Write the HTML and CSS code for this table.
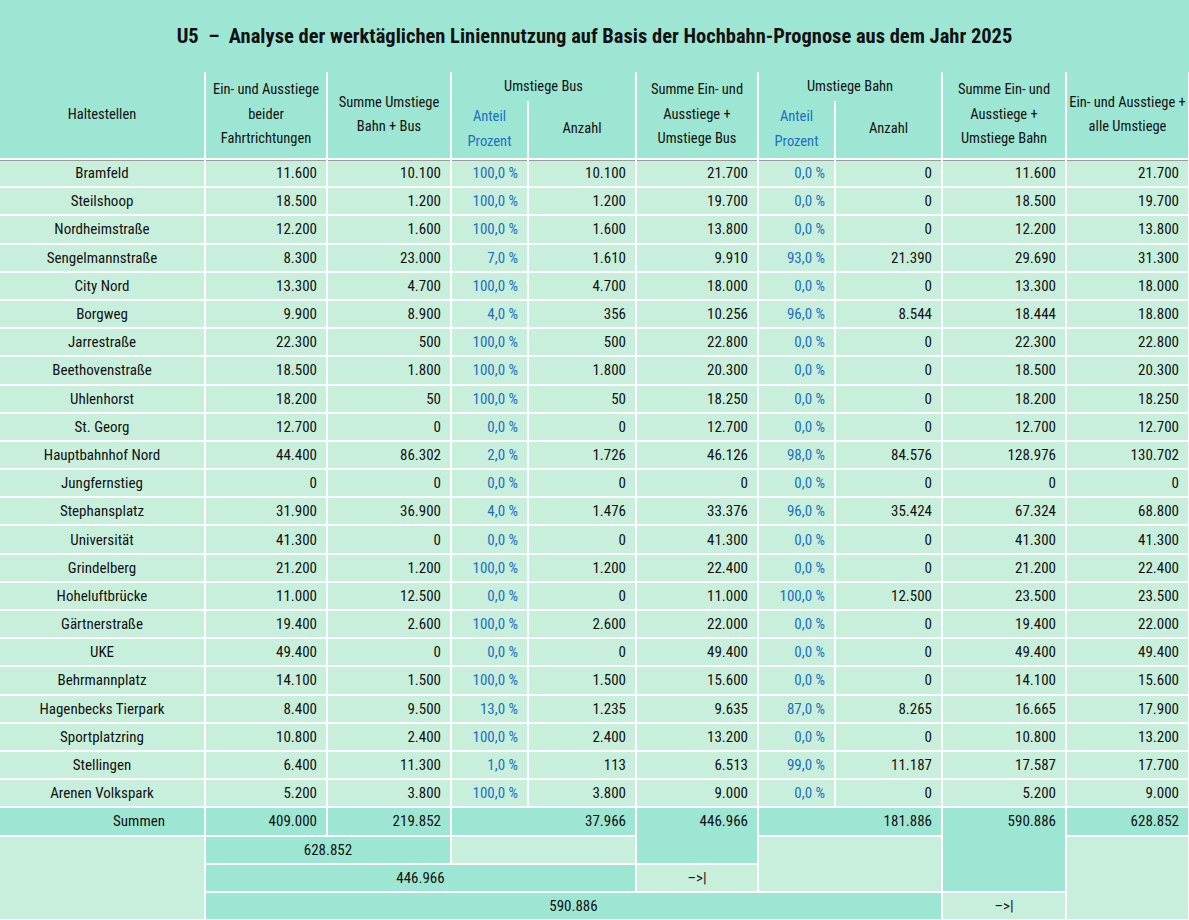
FILE: index.html
```html
<!DOCTYPE html>
<html lang="de">
<head>
  <meta charset="UTF-8" />
  <meta name="viewport" content="width=device-width, initial-scale=1.0" />
  <title>U5 Liniennutzung</title>
  <link rel="stylesheet" href="styles.css">
</head>
<body>
  <div class="title">U5&nbsp; –&nbsp; Analyse der werktäglichen Liniennutzung auf Basis der Hochbahn-Prognose aus dem Jahr 2025</div>

  <table class="sheet">
    <colgroup>
      <col style="width:205px"><col style="width:122px"><col style="width:124px">
      <col style="width:77px"><col style="width:108px"><col style="width:122px">
      <col style="width:77px"><col style="width:107px"><col style="width:124px">
      <col style="width:123px">
    </colgroup>
    <thead>
      <tr class="head-top">
        <th rowspan="2">Haltestellen</th>
        <th rowspan="2">Ein- und Ausstiege<br>beider<br>Fahrtrichtungen</th>
        <th rowspan="2">Summe Umstiege<br>Bahn + Bus</th>
        <th colspan="2">Umstiege Bus</th>
        <th rowspan="2">Summe Ein- und<br>Ausstiege +<br>Umstiege Bus</th>
        <th colspan="2">Umstiege Bahn</th>
        <th rowspan="2">Summe Ein- und<br>Ausstiege +<br>Umstiege Bahn</th>
        <th rowspan="2">Ein- und Ausstiege +<br>alle Umstiege</th>
      </tr>
      <tr class="head-sub">
        <th class="pct">Anteil<br>Prozent</th>
        <th>Anzahl</th>
        <th class="pct">Anteil<br>Prozent</th>
        <th>Anzahl</th>
      </tr>
    </thead>
    <tbody>
      <tr class="first"><td>Bramfeld</td><td>11.600</td><td>10.100</td><td class="pct">100,0 %</td><td>10.100</td><td>21.700</td><td class="pct">0,0 %</td><td>0</td><td>11.600</td><td>21.700</td></tr>
      <tr><td>Steilshoop</td><td>18.500</td><td>1.200</td><td class="pct">100,0 %</td><td>1.200</td><td>19.700</td><td class="pct">0,0 %</td><td>0</td><td>18.500</td><td>19.700</td></tr>
      <tr><td>Nordheimstraße</td><td>12.200</td><td>1.600</td><td class="pct">100,0 %</td><td>1.600</td><td>13.800</td><td class="pct">0,0 %</td><td>0</td><td>12.200</td><td>13.800</td></tr>
      <tr><td>Sengelmannstraße</td><td>8.300</td><td>23.000</td><td class="pct">7,0 %</td><td>1.610</td><td>9.910</td><td class="pct">93,0 %</td><td>21.390</td><td>29.690</td><td>31.300</td></tr>
      <tr><td>City Nord</td><td>13.300</td><td>4.700</td><td class="pct">100,0 %</td><td>4.700</td><td>18.000</td><td class="pct">0,0 %</td><td>0</td><td>13.300</td><td>18.000</td></tr>
      <tr><td>Borgweg</td><td>9.900</td><td>8.900</td><td class="pct">4,0 %</td><td>356</td><td>10.256</td><td class="pct">96,0 %</td><td>8.544</td><td>18.444</td><td>18.800</td></tr>
      <tr><td>Jarrestraße</td><td>22.300</td><td>500</td><td class="pct">100,0 %</td><td>500</td><td>22.800</td><td class="pct">0,0 %</td><td>0</td><td>22.300</td><td>22.800</td></tr>
      <tr><td>Beethovenstraße</td><td>18.500</td><td>1.800</td><td class="pct">100,0 %</td><td>1.800</td><td>20.300</td><td class="pct">0,0 %</td><td>0</td><td>18.500</td><td>20.300</td></tr>
      <tr><td>Uhlenhorst</td><td>18.200</td><td>50</td><td class="pct">100,0 %</td><td>50</td><td>18.250</td><td class="pct">0,0 %</td><td>0</td><td>18.200</td><td>18.250</td></tr>
      <tr><td>St. Georg</td><td>12.700</td><td>0</td><td class="pct">0,0 %</td><td>0</td><td>12.700</td><td class="pct">0,0 %</td><td>0</td><td>12.700</td><td>12.700</td></tr>
      <tr><td>Hauptbahnhof Nord</td><td>44.400</td><td>86.302</td><td class="pct">2,0 %</td><td>1.726</td><td>46.126</td><td class="pct">98,0 %</td><td>84.576</td><td>128.976</td><td>130.702</td></tr>
      <tr><td>Jungfernstieg</td><td>0</td><td>0</td><td class="pct">0,0 %</td><td>0</td><td>0</td><td class="pct">0,0 %</td><td>0</td><td>0</td><td>0</td></tr>
      <tr><td>Stephansplatz</td><td>31.900</td><td>36.900</td><td class="pct">4,0 %</td><td>1.476</td><td>33.376</td><td class="pct">96,0 %</td><td>35.424</td><td>67.324</td><td>68.800</td></tr>
      <tr><td>Universität</td><td>41.300</td><td>0</td><td class="pct">0,0 %</td><td>0</td><td>41.300</td><td class="pct">0,0 %</td><td>0</td><td>41.300</td><td>41.300</td></tr>
      <tr><td>Grindelberg</td><td>21.200</td><td>1.200</td><td class="pct">100,0 %</td><td>1.200</td><td>22.400</td><td class="pct">0,0 %</td><td>0</td><td>21.200</td><td>22.400</td></tr>
      <tr><td>Hoheluftbrücke</td><td>11.000</td><td>12.500</td><td class="pct">0,0 %</td><td>0</td><td>11.000</td><td class="pct">100,0 %</td><td>12.500</td><td>23.500</td><td>23.500</td></tr>
      <tr><td>Gärtnerstraße</td><td>19.400</td><td>2.600</td><td class="pct">100,0 %</td><td>2.600</td><td>22.000</td><td class="pct">0,0 %</td><td>0</td><td>19.400</td><td>22.000</td></tr>
      <tr><td>UKE</td><td>49.400</td><td>0</td><td class="pct">0,0 %</td><td>0</td><td>49.400</td><td class="pct">0,0 %</td><td>0</td><td>49.400</td><td>49.400</td></tr>
      <tr><td>Behrmannplatz</td><td>14.100</td><td>1.500</td><td class="pct">100,0 %</td><td>1.500</td><td>15.600</td><td class="pct">0,0 %</td><td>0</td><td>14.100</td><td>15.600</td></tr>
      <tr><td>Hagenbecks Tierpark</td><td>8.400</td><td>9.500</td><td class="pct">13,0 %</td><td>1.235</td><td>9.635</td><td class="pct">87,0 %</td><td>8.265</td><td>16.665</td><td>17.900</td></tr>
      <tr><td>Sportplatzring</td><td>10.800</td><td>2.400</td><td class="pct">100,0 %</td><td>2.400</td><td>13.200</td><td class="pct">0,0 %</td><td>0</td><td>10.800</td><td>13.200</td></tr>
      <tr><td>Stellingen</td><td>6.400</td><td>11.300</td><td class="pct">1,0 %</td><td>113</td><td>6.513</td><td class="pct">99,0 %</td><td>11.187</td><td>17.587</td><td>17.700</td></tr>
      <tr><td>Arenen Volkspark</td><td>5.200</td><td>3.800</td><td class="pct">100,0 %</td><td>3.800</td><td>9.000</td><td class="pct">0,0 %</td><td>0</td><td>5.200</td><td>9.000</td></tr>
    </tbody>
    <tfoot>
      <tr class="sums">
        <td class="label">Summen</td>
        <td>409.000</td>
        <td>219.852</td>
        <td colspan="2">37.966</td>
        <td rowspan="2" class="top">446.966</td>
        <td colspan="2">181.886</td>
        <td rowspan="3" class="top">590.886</td>
        <td>628.852</td>
      </tr>
      <tr>
        <td rowspan="3" class="light"></td>
        <td colspan="2" class="dark center">628.852</td>
        <td colspan="2" class="light"></td>
        <td colspan="2" rowspan="2" class="light"></td>
        <td rowspan="3" class="light"></td>
      </tr>
      <tr>
        <td colspan="4" class="dark center">446.966</td>
        <td class="light center">–&gt;|</td>
      </tr>
      <tr>
        <td colspan="7" class="dark center">590.886</td>
        <td class="light center">–&gt;|</td>
      </tr>
    </tfoot>
  </table>
</body>
</html>
```

FILE: styles.css
```css
body {
  margin: 0;
  font-family: "Roboto Condensed", "Open Sans", sans-serif;
  font-stretch: condensed;
  font-size: 15px;
  color: #111;
  background: #c8efdc;
}

.title {
  height: 72px;
  display: flex;
  align-items: center;
  justify-content: center;
  background: #9de6d3;
  font-size: 20.5px;
  font-weight: bold;
}

.sheet {
  width: 1189px;
  table-layout: fixed;
  border-collapse: collapse;
}

.sheet th {
  background: #9de6d3;
  font-weight: normal;
  font-size: 14.5px;
  line-height: 24.5px;
  padding: 0;
  white-space: nowrap;
  border-left: 2px solid #fff;
  border-right: 2px solid #fff;
  border-bottom: 2px solid #fff;
}

.sheet th:first-child {
  border-left: none;
}

.head-top th {
  border-top: none;
}

.head-top th[colspan] {
  height: 27px;
  padding-top: 2px;
  border-bottom: none;
}

.head-sub th {
  height: 57px;
}

.sheet .pct {
  color: #1b6fc2;
}

.sheet td {
  height: 26.2px;
  padding: 0 9px 0 0;
  text-align: right;
  border: 2px solid #fff;
  white-space: nowrap;
}

.sheet td:first-child {
  border-left: none;
}

tbody td {
  background: #c8efdc;
}

tbody td:first-child {
  text-align: center;
  padding: 0;
}

tbody .first td {
  box-shadow: inset 0 1px 0 #9b9b9b;
}

tfoot td {
  background: #9de6d3;
}

tfoot .label {
  padding-right: 39px;
}

tfoot .top {
  vertical-align: top;
  line-height: 26px;
}

tfoot td.light {
  background: #c8efdc;
}

tfoot td.dark {
  background: #9de6d3;
}

tfoot td.center {
  text-align: center;
  padding: 0;
}
```
